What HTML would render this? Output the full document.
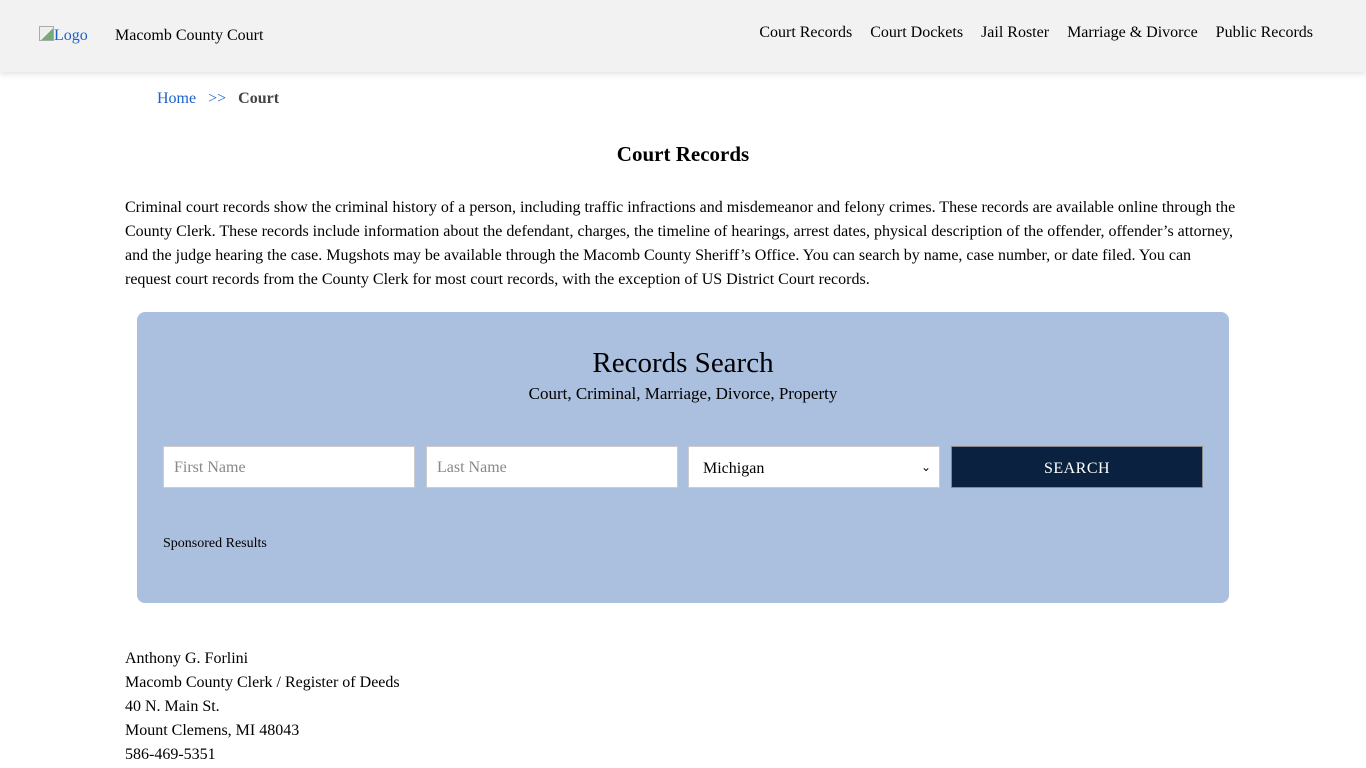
<!DOCTYPE html>
<html><head><meta charset="utf-8"><style>
*{box-sizing:border-box;margin:0;padding:0}
body{width:1366px;height:768px;overflow:hidden;background:#fff;font-family:"Liberation Serif",serif;color:#000}
.hdr{position:absolute;left:0;top:0;width:1366px;height:72px;background:#f2f2f2;box-shadow:0 2px 6px rgba(0,0,0,.12)}
.logo{position:absolute;left:39px;top:26px;font-size:16px;color:#1a62c8}
.logo i{display:inline-block;width:15px;height:15px;border:1px solid #aaa;vertical-align:-1px;background:linear-gradient(135deg,#eee 55%,#7a7 55%)}
.site{position:absolute;left:115px;top:27px;font-size:16px}
.nav{position:absolute;right:53px;top:24px;font-size:16px}
.nav span{margin-left:18px}
.bc{position:absolute;left:157px;top:90px;font-size:16px}
.bc a{color:#1a62c8}
.bc b{color:#444}
h1{position:absolute;left:0;width:1366px;top:142px;text-align:center;font-size:21px;font-weight:bold}
.p{position:absolute;left:125px;top:196px;width:1116px;font-size:16px;line-height:24px}
.box{position:absolute;left:137px;top:312px;width:1092px;height:291px;background:#abbfdf;border-radius:8px}
.t{position:absolute;left:0;width:1092px;top:35px;text-align:center;font-size:29px}
.st{position:absolute;left:0;width:1092px;top:72px;text-align:center;font-size:17px}
.in{position:absolute;top:134px;height:42px;width:252px;background:#fff;border:1px solid #ccc;font-size:16px;color:#888;padding:12px 10px}
.btn{position:absolute;left:814px;top:134px;width:252px;height:42px;background:#0a2240;color:#fff;font-size:16px;text-align:center;line-height:44px;border:1px solid #888;letter-spacing:.5px}
.sp{position:absolute;left:26px;top:224px;font-size:14px}
.addr{position:absolute;left:125px;top:647px;font-size:16px;line-height:24px}
</style></head><body>
<div class="hdr"><div class="logo"><i></i>Logo</div><div class="site">Macomb County Court</div>
<div class="nav"><span>Court Records</span><span>Court Dockets</span><span>Jail Roster</span><span>Marriage &amp; Divorce</span><span>Public Records</span></div></div>
<div class="bc"><a>Home</a>&nbsp;&nbsp;&nbsp;<a>&gt;&gt;</a>&nbsp;&nbsp;&nbsp;<b>Court</b></div>
<h1>Court Records</h1>
<div class="p">Criminal court records show the criminal history of a person, including traffic infractions and misdemeanor and felony crimes. These records are available online through the County Clerk. These records include information about the defendant, charges, the timeline of hearings, arrest dates, physical description of the offender, offender’s attorney, and the judge hearing the case. Mugshots may be available through the Macomb County Sheriff’s Office. You can search by name, case number, or date filed. You can request court records from the County Clerk for most court records, with the exception of US District Court records.</div>
<div class="box">
<div class="t">Records Search</div>
<div class="st">Court, Criminal, Marriage, Divorce, Property</div>
<div class="in" style="left:26px">First Name</div>
<div class="in" style="left:289px">Last Name</div>
<div class="in" style="left:551px;color:#000;padding-left:14px;padding-top:13px">Michigan<span style="position:absolute;right:8px;font-size:12px">⌄</span></div>
<div class="btn">SEARCH</div>
<div class="sp">Sponsored Results</div>
</div>
<div class="addr">Anthony G. Forlini<br>Macomb County Clerk / Register of Deeds<br>40 N. Main St.<br>Mount Clemens, MI 48043<br>586-469-5351</div>
</body></html>
